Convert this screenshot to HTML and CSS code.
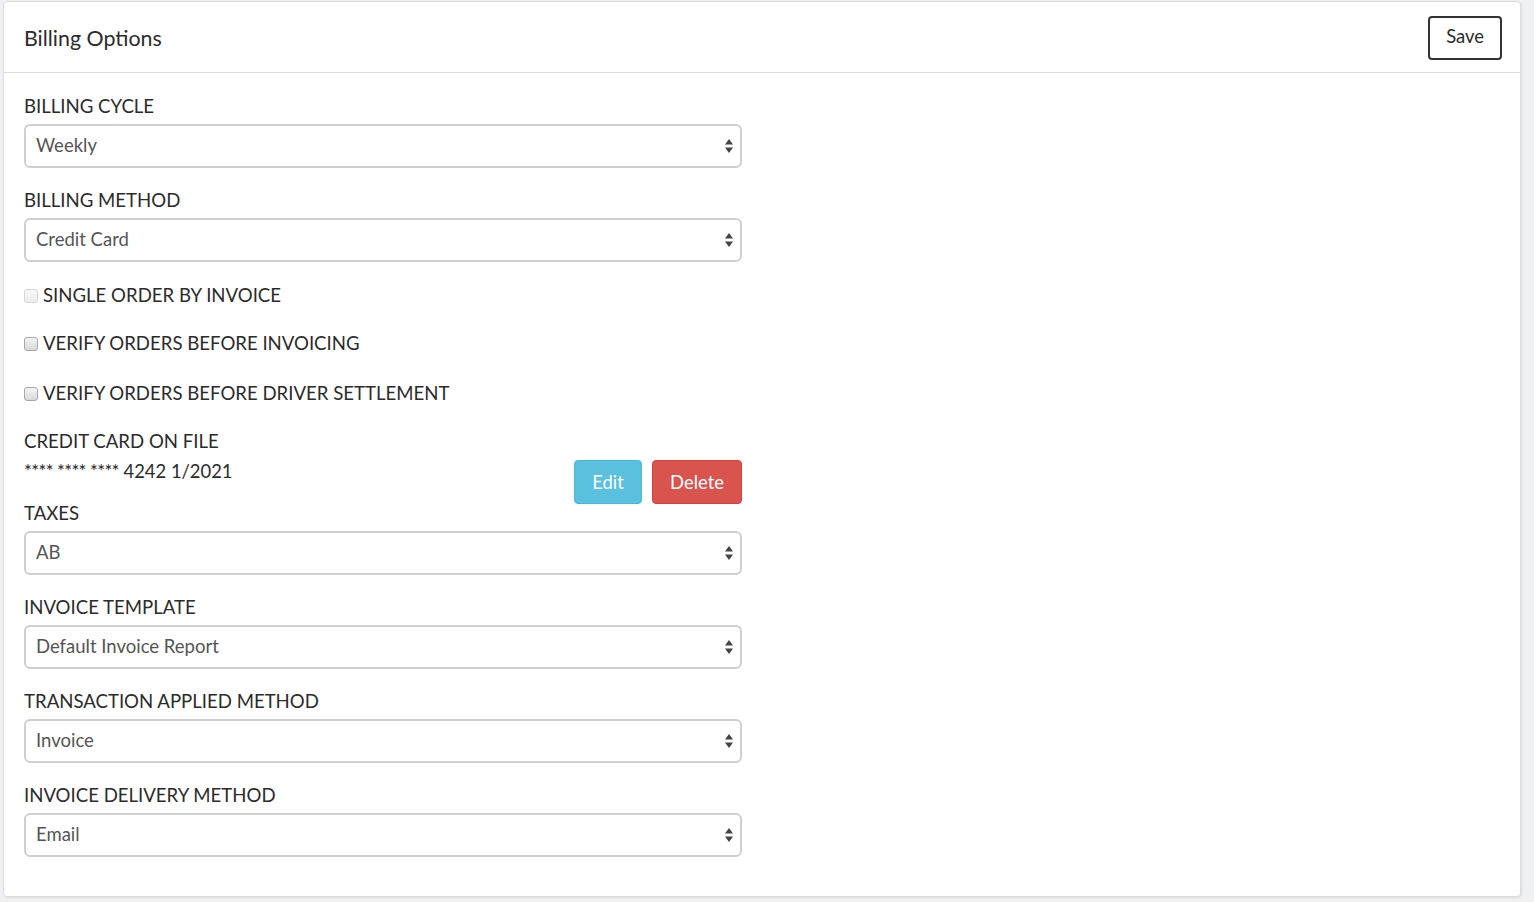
FILE: index.html
```html
<!DOCTYPE html>
<html>
<head>
<meta charset="utf-8">
<link rel="stylesheet" href="styles.css">
</head>
<body>
<div class="card">
  <div class="card-header">
    <h1 class="title">Billing Options</h1>
    <button class="btn btn-save">Save</button>
  </div>
  <div class="card-body">
    <div class="form">
      <div class="group">
        <label class="label">BILLING CYCLE</label>
        <div class="select-wrap">
          <select class="select"><option>Weekly</option></select>
          <svg class="arrows" width="8" height="14" viewBox="0 0 8 14"><path d="M4 0 L8 5.5 L0 5.5 Z M0 8.5 L8 8.5 L4 14 Z" fill="#444"/></svg>
        </div>
      </div>
      <div class="group">
        <label class="label">BILLING METHOD</label>
        <div class="select-wrap">
          <select class="select"><option>Credit Card</option></select>
          <svg class="arrows" width="8" height="14" viewBox="0 0 8 14"><path d="M4 0 L8 5.5 L0 5.5 Z M0 8.5 L8 8.5 L4 14 Z" fill="#444"/></svg>
        </div>
      </div>
      <div class="check-row check-first">
        <input type="checkbox" class="check" disabled>
        <span class="check-label">SINGLE ORDER BY INVOICE</span>
      </div>
      <div class="check-row check-second">
        <input type="checkbox" class="check">
        <span class="check-label">VERIFY ORDERS BEFORE INVOICING</span>
      </div>
      <div class="check-row check-third">
        <input type="checkbox" class="check">
        <span class="check-label">VERIFY ORDERS BEFORE DRIVER SETTLEMENT</span>
      </div>
      <div class="credit">
        <div class="label">CREDIT CARD ON FILE</div>
        <div class="credit-row">
          <div class="card-number"><span class="stars">**** **** ****</span> 4242 1/2021</div>
          <div class="credit-actions">
            <button class="btn btn-info">Edit</button>
            <button class="btn btn-danger">Delete</button>
          </div>
        </div>
      </div>
      <div class="group">
        <label class="label">TAXES</label>
        <div class="select-wrap">
          <select class="select"><option>AB</option></select>
          <svg class="arrows" width="8" height="14" viewBox="0 0 8 14"><path d="M4 0 L8 5.5 L0 5.5 Z M0 8.5 L8 8.5 L4 14 Z" fill="#444"/></svg>
        </div>
      </div>
      <div class="group">
        <label class="label">INVOICE TEMPLATE</label>
        <div class="select-wrap">
          <select class="select"><option>Default Invoice Report</option></select>
          <svg class="arrows" width="8" height="14" viewBox="0 0 8 14"><path d="M4 0 L8 5.5 L0 5.5 Z M0 8.5 L8 8.5 L4 14 Z" fill="#444"/></svg>
        </div>
      </div>
      <div class="group">
        <label class="label">TRANSACTION APPLIED METHOD</label>
        <div class="select-wrap">
          <select class="select"><option>Invoice</option></select>
          <svg class="arrows" width="8" height="14" viewBox="0 0 8 14"><path d="M4 0 L8 5.5 L0 5.5 Z M0 8.5 L8 8.5 L4 14 Z" fill="#444"/></svg>
        </div>
      </div>
      <div class="group">
        <label class="label">INVOICE DELIVERY METHOD</label>
        <div class="select-wrap">
          <select class="select"><option>Email</option></select>
          <svg class="arrows" width="8" height="14" viewBox="0 0 8 14"><path d="M4 0 L8 5.5 L0 5.5 Z M0 8.5 L8 8.5 L4 14 Z" fill="#444"/></svg>
        </div>
      </div>
    </div>
  </div>
</div>
</body>
</html>
```

FILE: styles.css
```css
html, body {
  margin: 0;
  padding: 0;
  background: #eff0f4;
}
body {
  font-family: Lato, "Open Sans", sans-serif;
  color: #2b2b2b;
  height: 902px;
  overflow: hidden;
}
.card {
  margin: 1px 13px 0 3px;
  background: #fff;
  border: 1px solid #dcdcdc;
  border-radius: 4px;
  box-shadow: 1px 1px 2px rgba(0,0,0,0.08);
  height: 896px;
  box-sizing: border-box;
}
.card-header {
  height: 71px;
  box-sizing: border-box;
  border-bottom: 1px solid #dcdcdc;
  display: flex;
  align-items: center;
  justify-content: space-between;
  padding: 0 18px 0 20px;
}
.title {
  margin: 0;
  font-size: 21.4px;
  font-weight: 400;
  color: #2b2b2b;
  line-height: 30px;
  margin-top: 2px;
}
.btn {
  font-family: Lato, "Open Sans", sans-serif;
  font-size: 18.4px;
  line-height: 24px;
  border-radius: 4px;
  cursor: pointer;
  box-sizing: border-box;
  height: 44px;
}
.btn-save {
  background: #fff;
  border: 2px solid #333;
  color: #2b2b2b;
  width: 74px;
  padding: 0 0 3px;
  margin-top: 1px;
}
.card-body {
  padding: 20px 20px;
}
.form {
  width: 718px;
  display: flex;
  flex-direction: column;
}
.group {
  display: flex;
  flex-direction: column;
  margin-bottom: 19px;
}
.label {
  font-size: 18.6px;
  line-height: 26px;
  color: #2b2b2b;
  margin-bottom: 5px;
}
.select-wrap {
  position: relative;
}
.select {
  appearance: none;
  -webkit-appearance: none;
  width: 100%;
  height: 44px;
  box-sizing: border-box;
  border: 2px solid #cfcfcf;
  border-radius: 6px;
  background: #fff;
  font-family: Lato, "Open Sans", sans-serif;
  font-size: 18.5px;
  color: #555;
  padding: 0 30px 2px 10px;
  display: block;
}
.arrows {
  position: absolute;
  right: 9px;
  top: 15px;
  pointer-events: none;
}
.check-row {
  display: flex;
  align-items: center;
  height: 26px;
}
.check-first {
  margin-top: 1px;
  margin-bottom: 22px;
}
.check-second {
  margin-bottom: 24px;
}
.check-third {
  margin-bottom: 22px;
}
.check {
  appearance: none;
  -webkit-appearance: none;
  width: 14px;
  height: 14px;
  margin: 2px 5px 0 0;
  border: 1px solid #a8a8a8;
  border-radius: 3px;
  background: linear-gradient(#f4f4f4, #d8d8d8);
  box-sizing: border-box;
}
.check:disabled {
  border-color: #d6d6d6;
  background: linear-gradient(#f8f8f8, #ececec);
}
.check-label {
  font-size: 18.6px;
  line-height: 26px;
  color: #2b2b2b;
}
.credit {
  margin-bottom: -4px;
}
.credit .label {
  margin-bottom: 0;
}
.credit-row {
  display: flex;
  justify-content: space-between;
  align-items: flex-start;
}
.card-number {
  font-size: 18.4px;
  line-height: 26px;
  margin-top: 4px;
  color: #2b2b2b;
}
.stars {
  letter-spacing: -0.6px;
}
.credit-actions {
  display: flex;
  gap: 10px;
  margin-top: 6px;
}
.btn-info {
  background: #5bc0de;
  border: 1px solid #46b8da;
  color: #fff;
  width: 68px;
  padding: 0;
}
.btn-danger {
  background: #d9534f;
  border: 1px solid #d43f3a;
  color: #fff;
  width: 90px;
  padding: 0;
}
```
